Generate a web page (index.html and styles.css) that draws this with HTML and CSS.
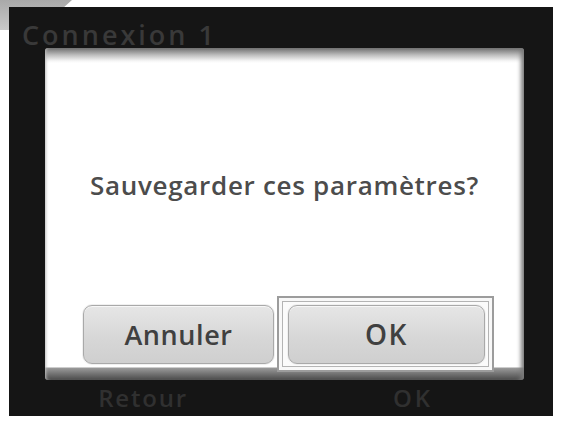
FILE: index.html
```html
<!DOCTYPE html>
<html lang="fr">
<head>
<meta charset="utf-8">
<title>Connexion 1</title>
<link rel="stylesheet" href="styles.css">
</head>
<body>
<svg class="tab" width="80" height="40" viewBox="0 0 80 40" aria-hidden="true">
  <defs>
    <linearGradient id="tg" x1="0" y1="0" x2="0" y2="1">
      <stop offset="0" stop-color="#a9a9a9"/>
      <stop offset="1" stop-color="#c8c8c8"/>
    </linearGradient>
  </defs>
  <path d="M0 0 H72 L62 9 H10 V30 H0 Z" fill="url(#tg)"/>
</svg>
<div class="screen">
  <div class="title">Connexion 1</div>
  <div class="dialog">
    <div class="message">Sauvegarder ces paramètres?</div>
    <div class="actions">
      <div class="btn cancel">Annuler</div>
      <div class="focus">
        <div class="btn ok">OK</div>
      </div>
    </div>
  </div>
  <div class="footer">
    <div class="foot-label">Retour</div>
    <div class="foot-label">OK</div>
  </div>
</div>
</body>
</html>
```
FILE: styles.css
```css
html, body {
  margin: 0;
  padding: 0;
  background: #ffffff;
}
body {
  width: 561px;
  height: 421px;
  overflow: hidden;
  position: relative;
  font-family: "Open Sans", "DejaVu Sans", sans-serif;
}
.tab {
  position: absolute;
  left: 0;
  top: 0;
}
.screen {
  position: relative;
  margin: 7px 0 0 9px;
  width: 544px;
  height: 409px;
  background: #151515;
  display: flex;
  flex-direction: column;
}
.title {
  height: 41px;
  box-sizing: border-box;
  padding: 13px 0 0 13px;
  font-size: 27px;
  line-height: 30px;
  letter-spacing: 3px;
  color: #393939;
  font-weight: 600;
}
.dialog {
  margin: 0 29px 0 36px;
  height: 332px;
  box-sizing: border-box;
  border-radius: 3px;
  background: linear-gradient(to bottom,
    #6e6e6e 0, #bdbdbd 7px, #f6f6f6 13px, #ffffff 15px,
    #ffffff calc(100% - 13px), #9a9a9a calc(100% - 12px), #4a4a4a 100%);
  box-shadow: inset -6px 0 4px -3px #7a7a7a, inset 3px 0 3px -2px #bbb;
  display: flex;
  flex-direction: column;
  padding: 0 0 8px 0;
}
.message {
  flex: 1;
  display: flex;
  align-items: center;
  justify-content: center;
  padding-top: 26px;
  font-size: 26px;
  font-weight: 600;
  color: #4c4c4c;
  letter-spacing: 0.7px;
}
.actions {
  height: 76px;
  display: flex;
  align-items: center;
  padding-left: 38px;
}
.btn {
  height: 59px;
  box-sizing: border-box;
  border: 1px solid #a9a9a9;
  border-radius: 9px;
  background: linear-gradient(to bottom, #e6e6e6, #d6d6d6 60%, #cfcfcf);
  box-shadow: inset 0 1px 0 #f7f7f7, 0 0 0 1px #f0f0f0;
  display: flex;
  align-items: center;
  justify-content: center;
  font-size: 27px;
  font-weight: 600;
  letter-spacing: 0.6px;
  color: #404040;
}
.cancel {
  width: 191px;
}
.focus {
  margin-left: 3px;
  width: 217px;
  height: 76px;
  box-sizing: border-box;
  border: 2px solid #9c9c9c;
  box-shadow: inset 0 0 0 3px #f8f8f8, inset 0 0 0 4px #b4b4b4;
  background: #fbfbfb;
  display: flex;
  align-items: center;
  padding-left: 9px;
}
.ok {
  width: 197px;
  font-size: 28px;
  letter-spacing: 1.5px;
}
.footer {
  flex: 1;
  display: flex;
  align-items: center;
  padding-bottom: 2px;
}
.foot-label {
  width: 272px;
  text-align: center;
  font-size: 24px;
  font-weight: 600;
  color: #303030;
  letter-spacing: 1.8px;
}
.foot-label:first-child {
  width: 268px;
}
.foot-label:last-child {
  letter-spacing: 3px;
}
```
